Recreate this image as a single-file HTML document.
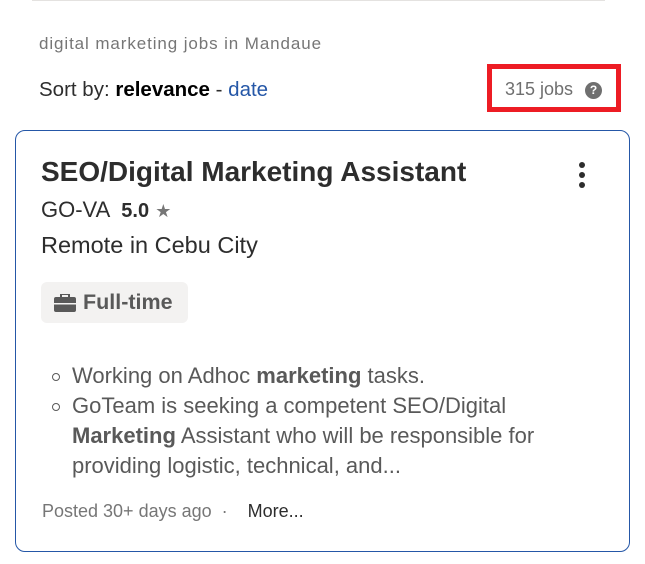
<!DOCTYPE html>
<html><head><style>
*{margin:0;padding:0;box-sizing:border-box}
body{width:645px;height:564px;background:#fff;font-family:"Liberation Sans",sans-serif;position:relative;overflow:hidden;color:#2d2d2d}
.a{position:absolute;white-space:nowrap}
</style></head><body>
<div class="a" style="left:32px;top:0;width:573px;height:1px;background:#e4e2e0"></div>
<div class="a" style="left:39px;top:34px;font-size:17px;letter-spacing:0.9px;color:#767676">digital marketing jobs in Mandaue</div>
<div class="a" style="left:39px;top:78px;font-size:20.5px;color:#2d2d2d">Sort by: <b style="color:#000">relevance</b> - <span style="color:#2557a7">date</span></div>
<div class="a" style="left:487px;top:64px;width:134px;height:48px;border:5px solid #ed1c24"></div>
<div class="a" style="left:505px;top:79px;font-size:18px;color:#6f6f6f">315 jobs</div>
<div class="a" style="left:585px;top:82px;width:17px;height:17px;border-radius:50%;background:#6f6f6f;color:#fff;font-size:12px;font-weight:bold;text-align:center;line-height:17px">?</div>
<div class="a" style="left:15px;top:130px;width:615px;height:422px;border:1px solid #2557a7;border-radius:10px"></div>
<div class="a" style="left:41px;top:156px;font-size:28px;font-weight:bold;color:#2d2d2d">SEO/Digital Marketing Assistant</div>
<div class="a" style="left:579px;top:162px;width:6px;height:6px;border-radius:50%;background:#2d2d2d;box-shadow:0 10px 0 #2d2d2d,0 20px 0 #2d2d2d"></div>
<div class="a" style="left:41px;top:197px;font-size:22px">GO-VA &nbsp;<b style="font-size:20px">5.0</b> <span style="color:#767676;font-size:18px">★</span></div>
<div class="a" style="left:41px;top:232px;font-size:23.5px">Remote in Cebu City</div>
<div class="a" style="left:41px;top:282px;width:147px;height:41px;background:#f3f2f1;border-radius:6px"></div>
<svg class="a" style="left:54px;top:294px" width="22" height="18" viewBox="0 0 22 18"><rect x="7" y="0" width="8" height="4" fill="none" stroke="#595959" stroke-width="2"/><rect x="0" y="3" width="22" height="15" rx="2" fill="#595959"/><rect x="0" y="9" width="22" height="1.5" fill="#f3f2f1"/></svg>
<div class="a" style="left:83px;top:290px;font-size:21.5px;font-weight:bold;color:#595959">Full-time</div>
<div style="position:absolute;left:48px;top:361px;font-size:22px;line-height:30px;color:#595959;white-space:nowrap">
<div style="position:relative;padding-left:24px"><span class="a" style="left:4px;top:12px;width:8px;height:8px;border:1.5px solid #595959;border-radius:50%"></span>Working on Adhoc <b>marketing</b> tasks.</div>
<div style="position:relative;padding-left:24px"><span class="a" style="left:4px;top:12px;width:8px;height:8px;border:1.5px solid #595959;border-radius:50%"></span>GoTeam is seeking a competent SEO/Digital<br><b>Marketing</b> Assistant who will be responsible for<br>providing logistic, technical, and...</div>
</div>
<div class="a" style="left:42px;top:501px;font-size:18px;color:#767676">Posted 30+ days ago &nbsp;· &nbsp;&nbsp;&nbsp;<span style="color:#2d2d2d">More...</span></div>
</body></html>
